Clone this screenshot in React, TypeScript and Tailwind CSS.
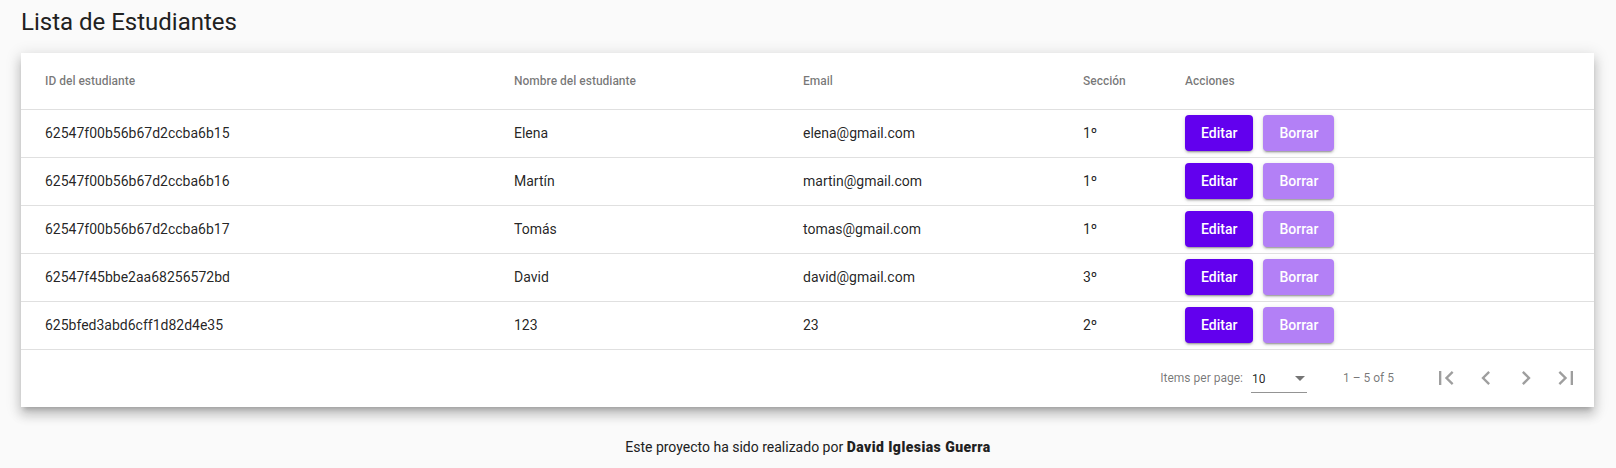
import React from 'react';

interface Student {
    id: string;
    name: string;
    email: string;
    section: string;
}

const students: Student[] = [
    { id: '62547f00b56b67d2ccba6b15', name: 'Elena', email: 'elena@gmail.com', section: '1º' },
    { id: '62547f00b56b67d2ccba6b16', name: 'Martín', email: 'martin@gmail.com', section: '1º' },
    { id: '62547f00b56b67d2ccba6b17', name: 'Tomás', email: 'tomas@gmail.com', section: '1º' },
    { id: '62547f45bbe2aa68256572bd', name: 'David', email: 'david@gmail.com', section: '3º' },
    { id: '625bfed3abd6cff1d82d4e35', name: '123', email: '23', section: '2º' },
];

const PagerIcon = ({ d }: { d: string }) => (
    <button className="w-[40px] h-[40px] flex items-center justify-center text-black/[0.38]" disabled>
        <svg className="w-[28px] h-[28px]" viewBox="0 0 24 24" fill="currentColor"><path d={d} /></svg>
    </button>
);

const App: React.FC = () => {
    return (
        <div className="min-h-[468px] bg-[#fafafa] font-['Roboto',sans-serif] text-black/[0.87]">
            {/* Title */}
            <h1 className="pl-[21px] pt-[6px] text-[24px] leading-[32px] font-normal text-[#212121]">Lista de Estudiantes</h1>

            {/* Table card */}
            <div className="ml-[21px] mr-[22px] mt-[15px] bg-white shadow-[0_5px_5px_-3px_rgba(0,0,0,0.2),0_8px_10px_1px_rgba(0,0,0,0.14),0_3px_14px_2px_rgba(0,0,0,0.12)]">
                <table className="w-full table-fixed border-collapse text-left">
                    <colgroup>
                        <col className="w-[493px]" />
                        <col className="w-[289px]" />
                        <col className="w-[280px]" />
                        <col className="w-[102px]" />
                        <col />
                    </colgroup>
                    <thead>
                        <tr className="h-[56px] border-b border-[#e0e0e0]">
                            <th className="pl-[24px] text-[12px] font-medium text-black/[0.54]">ID del estudiante</th>
                            <th className="text-[12px] font-medium text-black/[0.54]">Nombre del estudiante</th>
                            <th className="text-[12px] font-medium text-black/[0.54]">Email</th>
                            <th className="text-[12px] font-medium text-black/[0.54]">Sección</th>
                            <th className="pr-[24px] text-[12px] font-medium text-black/[0.54]">Acciones</th>
                        </tr>
                    </thead>
                    <tbody>
                        {students.map((s) => (
                            <tr key={s.id} className="h-[48px] border-b border-[#e0e0e0] text-[14px]">
                                <td className="pl-[24px]">{s.id}</td>
                                <td>{s.name}</td>
                                <td>{s.email}</td>
                                <td>{s.section}</td>
                                <td className="pr-[24px]">
                                    <div className="flex gap-[10px]">
                                        <button className="h-[36px] min-w-[64px] px-[16px] rounded-[4px] bg-[#6200ee] text-white text-[14px] font-medium shadow-[0_3px_1px_-2px_rgba(0,0,0,0.2),0_2px_2px_0_rgba(0,0,0,0.14),0_1px_5px_0_rgba(0,0,0,0.12)]">
                                            Editar
                                        </button>
                                        <button className="h-[36px] min-w-[64px] px-[16px] rounded-[4px] bg-[#b380f6] text-white text-[14px] font-medium shadow-[0_3px_1px_-2px_rgba(0,0,0,0.2),0_2px_2px_0_rgba(0,0,0,0.14),0_1px_5px_0_rgba(0,0,0,0.12)]">
                                            Borrar
                                        </button>
                                    </div>
                                </td>
                            </tr>
                        ))}
                    </tbody>
                </table>

                {/* Paginator */}
                <div className="h-[57px] flex items-center justify-end px-[8px] text-[12px] text-black/[0.54]">
                    <span className="mr-[8px]">Items per page:</span>
                    <div className="mt-[6px] w-[56px] flex items-center justify-between pb-[4px] border-b border-black/[0.42] leading-[18px]">
                        <span className="text-black/[0.87] pl-[1px]">10</span>
                        <span className="mr-[2px] w-0 h-0 border-l-[5px] border-r-[5px] border-t-[5px] border-l-transparent border-r-transparent border-t-black/[0.54]" />
                    </div>
                    <span className="ml-[36px] mr-[32px]">1 – 5 of 5</span>
                    <PagerIcon d="M18.41 16.59L13.82 12l4.59-4.59L17 6l-6 6 6 6zM6 6h2v12H6z" />
                    <PagerIcon d="M15.41 7.41L14 6l-6 6 6 6 1.41-1.41L10.83 12z" />
                    <PagerIcon d="M10 6L8.59 7.41 13.17 12l-4.58 4.59L10 18l6-6z" />
                    <PagerIcon d="M5.59 7.41L10.18 12l-4.59 4.59L7 18l6-6-6-6zM16 6h2v12h-2z" />
                </div>
            </div>

            {/* Footer */}
            <p className="mt-[30px] text-center text-[14px] leading-[20px] text-[#212121]">
                Este proyecto ha sido realizado por <span className="font-black tracking-[0.45px]">David Iglesias Guerra</span>
            </p>
        </div>
    );
};

export default App;
